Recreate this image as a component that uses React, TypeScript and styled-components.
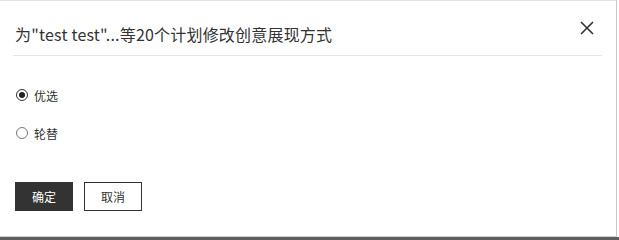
import React, { useState } from "react";
import styled, { createGlobalStyle } from "styled-components";

const Global = createGlobalStyle`
  html, body { margin: 0; padding: 0; background: #fff; }
  body { font-family: "Noto Sans CJK SC", "Noto Sans", sans-serif; color: #333; }
  * { box-sizing: border-box; }
`;

const Page = styled.div`
  width: 619px;
  height: 240px;
  display: flex;
  flex-direction: column;
  background: #fff;
`;

const Dialog = styled.div`
  width: 617px;
  height: 237px;
  border-top: 1px solid #e4e4e4;
  border-right: 1px solid #c8c8c8;
  border-bottom: 1px solid #cfcfcf;
  background: #fff;
  display: flex;
  flex-direction: column;
`;

const Shadow = styled.div`
  height: 3px;
  background: #5f5f5f;
`;

const Header = styled.div`
  margin: 0 14px 0 13px;
  height: 55px;
  border-bottom: 1px solid #e6e6e6;
  display: flex;
  align-items: center;
  justify-content: space-between;
  padding: 0 0 0 2px;
`;

const Title = styled.h2`
  margin: 0;
  padding-top: 12px;
  font-size: 16px;
  font-weight: 400;
  color: #333;
  letter-spacing: 0.2px;
`;

const Close = styled.button`
  border: 0;
  background: transparent;
  padding: 0;
  margin: 0 7px 0 0;
  width: 16px;
  height: 16px;
  display: flex;
  align-items: center;
  justify-content: center;
  cursor: pointer;
`;

const Body = styled.div`
  padding: 33px 15px 0 16px;
  display: flex;
  flex-direction: column;
  gap: 26px;
`;

const Option = styled.label`
  display: flex;
  align-items: center;
  gap: 6px;
  height: 12px;
  font-size: 12px;
  color: #333;
  cursor: pointer;
`;

const Circle = styled.span<{ $on: boolean }>`
  width: 12px;
  height: 12px;
  border-radius: 50%;
  border: 1px solid ${(p) => (p.$on ? "#333" : "#777")};
  display: flex;
  align-items: center;
  justify-content: center;
  &::after {
    content: "";
    width: 6px;
    height: 6px;
    border-radius: 50%;
    background: ${(p) => (p.$on ? "#222" : "transparent")};
  }
`;

const Footer = styled.div`
  margin-top: 43px;
  padding-left: 15px;
  display: flex;
  gap: 11px;
`;

const Btn = styled.button<{ $primary?: boolean }>`
  width: 58px;
  height: 29px;
  font-family: "Noto Sans CJK SC", sans-serif;
  font-size: 12px;
  border: 1px solid #333;
  background: ${(p) => (p.$primary ? "#333" : "#fff")};
  color: ${(p) => (p.$primary ? "#fff" : "#333")};
  padding: 0;
  cursor: pointer;
`;

export default function App() {
  const [val, setVal] = useState("a");
  return (
    <Page>
      <Global />
      <Dialog>
        <Header>
          <Title>为"test test"...等20个计划修改创意展现方式</Title>
          <Close aria-label="close">
            <svg width="14" height="14" viewBox="0 0 14 14">
              <path d="M1 1 L13 13 M13 1 L1 13" stroke="#333" strokeWidth="1.6" fill="none" />
            </svg>
          </Close>
        </Header>
        <Body>
          <Option onClick={() => setVal("a")}>
            <Circle $on={val === "a"} />
            优选
          </Option>
          <Option onClick={() => setVal("b")}>
            <Circle $on={val === "b"} />
            轮替
          </Option>
        </Body>
        <Footer>
          <Btn $primary>确定</Btn>
          <Btn>取消</Btn>
        </Footer>
      </Dialog>
      <Shadow />
    </Page>
  );
}
